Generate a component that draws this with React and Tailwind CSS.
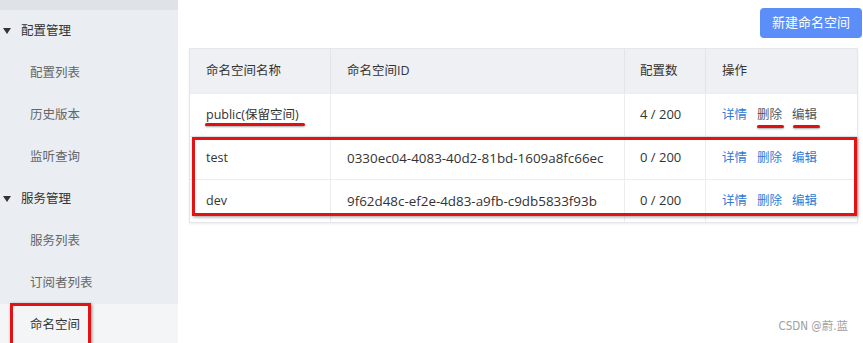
import React from "react";

const font = "font-['Open_Sans','Noto_Sans_CJK_SC',sans-serif]";

const menu = [
  { label: "配置管理", group: true },
  { label: "配置列表" },
  { label: "历史版本" },
  { label: "监听查询" },
  { label: "服务管理", group: true },
  { label: "服务列表" },
  { label: "订阅者列表" },
  { label: "命名空间", active: true },
];

const rows = [
  { name: "public(保留空间)", id: "", count: "4 / 200", reserved: true },
  { name: "test", id: "0330ec04-4083-40d2-81bd-1609a8fc66ec", count: "0 / 200" },
  { name: "dev", id: "9f62d48c-ef2e-4d83-a9fb-c9db5833f93b", count: "0 / 200" },
];

// little red pen marks drawn over the screenshot
const Underline = ({ className }) => (
  <span
    className={
      "absolute h-[3px] rounded-full bg-[#e01010] shadow-[0_1px_2px_rgba(0,0,0,0.35)] " +
      className
    }
  />
);

const Sidebar = () => (
  <div className="relative w-[178px] shrink-0 bg-[#eaedf1]">
    <div className="h-[10px] bg-[#dfe2e6]" />
    {menu.map((m) =>
      m.group ? (
        <div key={m.label} className="flex h-[42px] items-center text-[#333]">
          <svg width="8" height="6" viewBox="0 0 8 6" className="ml-[3px] mr-[10px]">
            <polygon points="0,0 8,0 4,6" fill="#333" />
          </svg>
          <span>{m.label}</span>
        </div>
      ) : (
        <div
          key={m.label}
          className={
            "flex h-[42px] items-center pl-[30px] " +
            (m.active ? "bg-[#f4f5f7] pl-[21px] text-[#333]" : "text-[#666]")
          }
        >
          {m.label}
        </div>
      )
    )}
    {/* annotation box */}
    <div className="absolute left-[10px] top-[303px] h-[44px] w-[81px] border-[3px] border-[#e31313] shadow-[1px_1px_3px_rgba(0,0,0,0.4)]" />
  </div>
);

const NamespaceTable = () => (
  <div className="relative mr-[4px] border border-[#e4e6ea] shadow-[0_1px_2px_rgba(0,0,0,0.08)]">
    <div className="grid h-[44px] grid-cols-[141px_294px_81px_1fr] bg-[#eff0f3] text-[#333]">
      <div className="flex items-center border-r border-[#e2e4e8] pl-[16px]">命名空间名称</div>
      <div className="flex items-center border-r border-[#e2e4e8] pl-[16px]">命名空间ID</div>
      <div className="flex items-center border-r border-[#e2e4e8] pl-[15px]">配置数</div>
      <div className="flex items-center pl-[16px]">操作</div>
    </div>
    {rows.map((r) => (
      <div
        key={r.name}
        className="grid h-[43px] grid-cols-[141px_294px_81px_1fr] border-t border-[#ebedf0] bg-white text-[#333]"
      >
        <div className="relative flex items-center border-r border-[#ebedf0] pl-[16px]">
          {r.name}
          {r.reserved && <Underline className="left-[15px] top-[29px] w-[100px]" />}
        </div>
        <div className="flex items-center border-r border-[#ebedf0] pl-[16px] text-[13.4px]">{r.id}</div>
        <div className="flex items-center border-r border-[#ebedf0] pl-[15px] text-[13px]">{r.count}</div>
        <div className="relative flex items-center gap-[10px] pl-[16px]">
          <span className="text-[#2f7bd8]">详情</span>
          <span className={r.reserved ? "text-[#555]" : "text-[#2f7bd8]"}>删除</span>
          <span className={r.reserved ? "text-[#555]" : "text-[#2f7bd8]"}>编辑</span>
          {r.reserved && (
            <>
              <Underline className="left-[51px] top-[31px] w-[27px]" />
              <Underline className="left-[87px] top-[31px] w-[27px]" />
            </>
          )}
        </div>
      </div>
    ))}
    {/* annotation box around test/dev rows */}
    <div className="absolute left-[2px] top-[88px] h-[79px] w-[665px] border-[3px] border-[#e31313] shadow-[1px_1px_3px_rgba(0,0,0,0.4)]" />
  </div>
);

export default function App() {
  return (
    <div className={`${font} flex h-[343px] w-[863px] overflow-hidden bg-white text-[12.5px]`}>
      <Sidebar />
      <div className="relative flex flex-1 flex-col pl-[11px] pr-[1px] pt-[8px]">
        <div className="flex justify-end">
          <button className="h-[30px] w-[102px] rounded-[4px] bg-[#5b8ef8] text-[13px] text-white">
            新建命名空间
          </button>
        </div>
        <div className="mt-[10px]">
          <NamespaceTable />
        </div>
        <div className="mt-auto mb-[8px] flex justify-end pr-[14px] font-['DejaVu_Sans_Condensed','Noto_Sans_CJK_SC',sans-serif] text-[11.5px] text-[#a0a0a0]">
          CSDN @蔚.蓝
        </div>
      </div>
    </div>
  );
}
